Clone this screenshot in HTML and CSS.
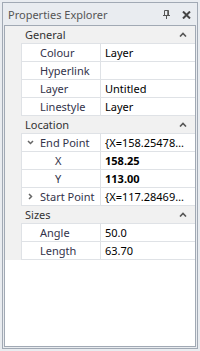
FILE: index.html
```html
<!DOCTYPE html>
<html>
<head>
<meta charset="utf-8">
<link rel="stylesheet" href="styles.css">
</head>
<body>
<div class="panel">
  <div class="titlebar">
    <span class="title">Properties Explorer</span>
    <span class="tools">
      <svg class="pin" width="8" height="9" viewBox="0 0 8 9"><path d="M1.5 0.5H5.5M1.5 0.5V5M5 0.5V5M0 5.5H7M3.5 5.5V9" stroke="#555" stroke-width="1" fill="none"/><rect x="4.5" y="0.5" width="1.5" height="5" fill="#555"/></svg>
      <svg class="close" width="9" height="8" viewBox="0 0 9 8"><path d="M1 0.5L8 7.5M8 0.5L1 7.5" stroke="#444" stroke-width="2" fill="none"/></svg>
    </span>
  </div>
  <div class="content">
    <div class="cat"><span class="gut"></span><div class="cbody"><span>General</span><svg class="chev" width="8" height="5" viewBox="0 0 8 5"><path d="M1 4.5L4 1.5L7 4.5" stroke="#555" stroke-width="1.6" fill="none"/></svg></div></div>
    <div class="prop"><span class="gut"></span><div class="name">Colour</div><div class="val">Layer</div></div>
    <div class="prop"><span class="gut"></span><div class="name">Hyperlink</div><div class="val"></div></div>
    <div class="prop"><span class="gut"></span><div class="name">Layer</div><div class="val">Untitled</div></div>
    <div class="prop"><span class="gut"></span><div class="name">Linestyle</div><div class="val">Layer</div></div>
    <div class="cat"><span class="gut"></span><div class="cbody"><span>Location</span><svg class="chev" width="8" height="5" viewBox="0 0 8 5"><path d="M1 4.5L4 1.5L7 4.5" stroke="#555" stroke-width="1.6" fill="none"/></svg></div></div>
    <div class="prop"><span class="gut"></span><div class="name exp"><svg class="tog" width="7" height="5" viewBox="0 0 7 5"><path d="M1 1L3.5 3.5L6 1" stroke="#666" stroke-width="1.5" fill="none"/></svg>End Point</div><div class="val">{X=158.25478…</div></div>
    <div class="prop"><span class="gut"></span><div class="name sub">X</div><div class="val b">158.25</div></div>
    <div class="prop"><span class="gut"></span><div class="name sub">Y</div><div class="val b">113.00</div></div>
    <div class="prop"><span class="gut"></span><div class="name exp"><svg class="tog" width="7" height="7" viewBox="0 0 7 7"><path d="M2 1L4.5 3.5L2 6" stroke="#666" stroke-width="1.5" fill="none"/></svg>Start Point</div><div class="val">{X=117.28469…</div></div>
    <div class="cat"><span class="gut"></span><div class="cbody"><span>Sizes</span><svg class="chev" width="8" height="5" viewBox="0 0 8 5"><path d="M1 4.5L4 1.5L7 4.5" stroke="#555" stroke-width="1.6" fill="none"/></svg></div></div>
    <div class="prop"><span class="gut"></span><div class="name">Angle</div><div class="val">50.0</div></div>
    <div class="prop"><span class="gut"></span><div class="name">Length</div><div class="val">63.70</div></div>
  </div>
</div>
</body>
</html>
```
FILE: styles.css
```css
html, body {
  margin: 0;
  padding: 0;
}
body {
  background: #e9ecf0;
  font-family: "Noto Sans", "DejaVu Sans", sans-serif;
  font-size: 11px;
  width: 200px;
  height: 351px;
  overflow: hidden;
}
.panel {
  box-sizing: border-box;
  margin: 2px;
  width: 196px;
  height: 347px;
  border: 1px solid #a1a9b4;
  padding: 0 1px 1px 1px;
  display: flex;
  flex-direction: column;
}
.titlebar {
  height: 22px;
  display: flex;
  align-items: center;
  justify-content: space-between;
  padding: 0 5px 0 4px;
}
.title {
  color: #555;
  white-space: nowrap;
  font-size: 11px;
}
.tools {
  display: flex;
  align-items: center;
  gap: 11px;
  padding-top: 1px;
}
.content {
  flex: 1;
  background: #fff;
  border: 1px solid #a1a9b4;
  display: flex;
  flex-direction: column;
}
.cat, .prop {
  display: flex;
  height: 18px;
  box-sizing: border-box;
}
.gut {
  width: 16px;
  flex: none;
  background: #f1f1f1;
}
.cat {
  background: #f1f1f1;
}
.cbody {
  flex: 1;
  display: flex;
  align-items: center;
  justify-content: space-between;
  padding: 0 8px 0 4px;
  border-bottom: 1px solid #dfe2e6;
  color: #333;
}
.name {
  box-sizing: border-box;
  width: 80px;
  flex: none;
  border-left: 1px solid #dfe2e6;
  border-right: 1px solid #dfe2e6;
  border-bottom: 1px solid #dfe2e6;
  padding-left: 18px;
  color: #33334a;
  display: flex;
  align-items: center;
  white-space: nowrap;
  overflow: hidden;
}
.name.exp {
  padding-left: 5px;
}
.tog {
  margin-right: 6px;
  flex: none;
}
.name.sub {
  padding-left: 33px;
}
.val {
  flex: 1;
  border-bottom: 1px solid #dfe2e6;
  padding-left: 4px;
  color: #000;
  display: flex;
  align-items: center;
  white-space: nowrap;
  overflow: hidden;
}
.val.b {
  font-weight: bold;
}
```
